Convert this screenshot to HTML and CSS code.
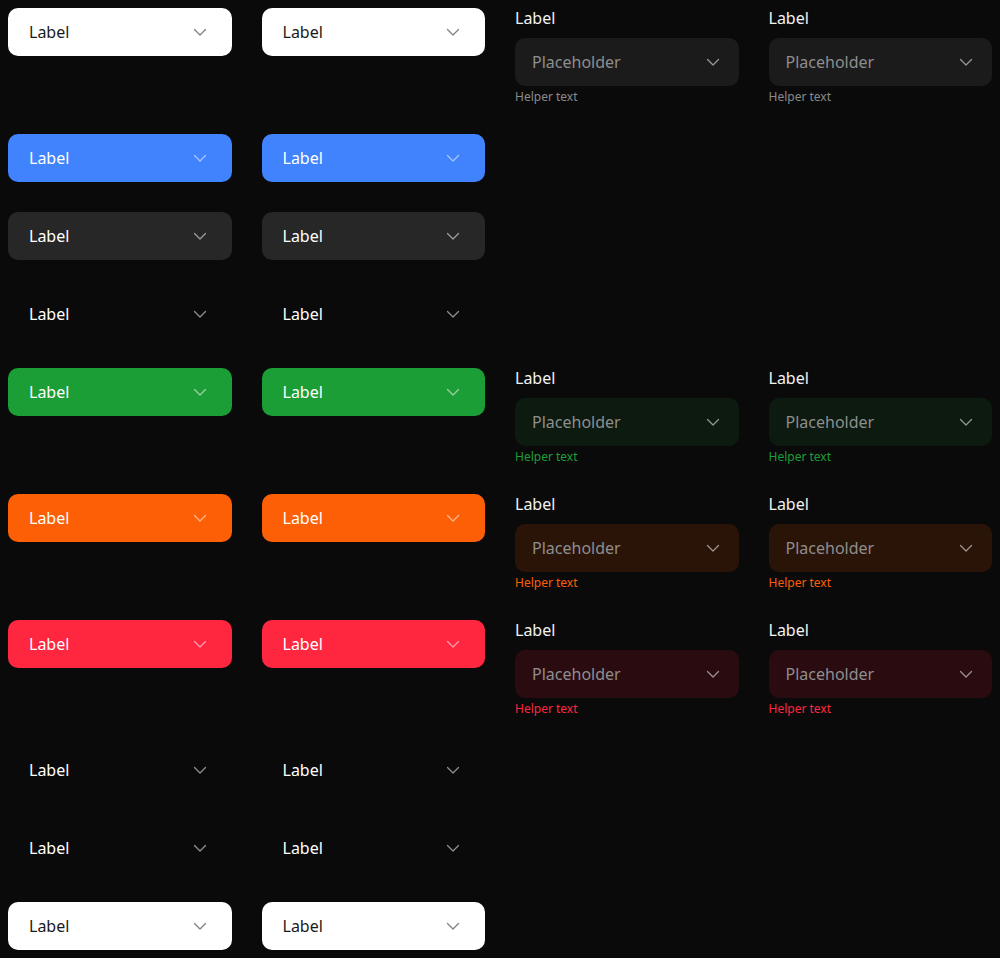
FILE: index.html
```html
<!DOCTYPE html>
<html lang="en">
<head>
  <meta charset="UTF-8">
  <title>Select variants</title>
  <link rel="stylesheet" href="styles.css">
</head>
<body>
  <svg style="display:none">
    <symbol id="chev" viewBox="0 0 24 24"><path d="M6.5 9.5l5.5 5.5 5.5-5.5" fill="none" stroke="currentColor" stroke-width="1.25" stroke-linecap="round" stroke-linejoin="round"/></symbol>
  </svg>
  <div class="grid">
    <!-- row 1 -->
    <div class="select white"><span>Label</span><svg class="chev"><use href="#chev"/></svg></div>
    <div class="select white"><span>Label</span><svg class="chev"><use href="#chev"/></svg></div>
    <div class="field">
      <label>Label</label>
      <div class="select box neutral"><span>Placeholder</span><svg class="chev"><use href="#chev"/></svg></div>
      <small class="helper">Helper text</small>
    </div>
    <div class="field">
      <label>Label</label>
      <div class="select box neutral"><span>Placeholder</span><svg class="chev"><use href="#chev"/></svg></div>
      <small class="helper">Helper text</small>
    </div>

    <!-- row 2 -->
    <div class="select blue"><span>Label</span><svg class="chev"><use href="#chev"/></svg></div>
    <div class="select blue"><span>Label</span><svg class="chev"><use href="#chev"/></svg></div>
    <div></div><div></div>

    <!-- row 3 -->
    <div class="select dark"><span>Label</span><svg class="chev"><use href="#chev"/></svg></div>
    <div class="select dark"><span>Label</span><svg class="chev"><use href="#chev"/></svg></div>
    <div></div><div></div>

    <!-- row 4 -->
    <div class="select ghost"><span>Label</span><svg class="chev"><use href="#chev"/></svg></div>
    <div class="select ghost"><span>Label</span><svg class="chev"><use href="#chev"/></svg></div>
    <div></div><div></div>

    <!-- row 5 -->
    <div class="select green"><span>Label</span><svg class="chev"><use href="#chev"/></svg></div>
    <div class="select green"><span>Label</span><svg class="chev"><use href="#chev"/></svg></div>
    <div class="field success">
      <label>Label</label>
      <div class="select box"><span>Placeholder</span><svg class="chev"><use href="#chev"/></svg></div>
      <small class="helper">Helper text</small>
    </div>
    <div class="field success">
      <label>Label</label>
      <div class="select box"><span>Placeholder</span><svg class="chev"><use href="#chev"/></svg></div>
      <small class="helper">Helper text</small>
    </div>

    <!-- row 6 -->
    <div class="select orange"><span>Label</span><svg class="chev"><use href="#chev"/></svg></div>
    <div class="select orange"><span>Label</span><svg class="chev"><use href="#chev"/></svg></div>
    <div class="field warning">
      <label>Label</label>
      <div class="select box"><span>Placeholder</span><svg class="chev"><use href="#chev"/></svg></div>
      <small class="helper">Helper text</small>
    </div>
    <div class="field warning">
      <label>Label</label>
      <div class="select box"><span>Placeholder</span><svg class="chev"><use href="#chev"/></svg></div>
      <small class="helper">Helper text</small>
    </div>

    <!-- row 7 -->
    <div class="select red"><span>Label</span><svg class="chev"><use href="#chev"/></svg></div>
    <div class="select red"><span>Label</span><svg class="chev"><use href="#chev"/></svg></div>
    <div class="field danger">
      <label>Label</label>
      <div class="select box"><span>Placeholder</span><svg class="chev"><use href="#chev"/></svg></div>
      <small class="helper">Helper text</small>
    </div>
    <div class="field danger">
      <label>Label</label>
      <div class="select box"><span>Placeholder</span><svg class="chev"><use href="#chev"/></svg></div>
      <small class="helper">Helper text</small>
    </div>

    <!-- row 8 -->
    <div class="select ghost"><span>Label</span><svg class="chev"><use href="#chev"/></svg></div>
    <div class="select ghost"><span>Label</span><svg class="chev"><use href="#chev"/></svg></div>
    <div></div><div></div>

    <!-- row 9 -->
    <div class="select ghost"><span>Label</span><svg class="chev"><use href="#chev"/></svg></div>
    <div class="select ghost"><span>Label</span><svg class="chev"><use href="#chev"/></svg></div>
    <div></div><div></div>

    <!-- row 10 -->
    <div class="select white"><span>Label</span><svg class="chev"><use href="#chev"/></svg></div>
    <div class="select white"><span>Label</span><svg class="chev"><use href="#chev"/></svg></div>
    <div></div><div></div>
  </div>
</body>
</html>
```

FILE: styles.css
```css
body {
  margin: 0;
  padding: 8px;
  background: #0a0a0a;
  color: #f2f2f2;
  font-family: "Noto Sans", "Open Sans", sans-serif;
}
.grid {
  display: grid;
  grid-template-columns: repeat(4, 1fr);
  column-gap: 30px;
  row-gap: 30px;
  align-items: start;
}
.select {
  height: 48px;
  box-sizing: border-box;
  display: flex;
  align-items: center;
  justify-content: space-between;
  padding: 0 20px 0 21px;
  border-radius: 10px;
  font-size: 16px;
  color: #fff;
}
.chev {
  width: 24px;
  height: 24px;
  opacity: 0.55;
}
.white {
  background: #fff;
  color: #1a1a1a;
}
.blue { background: #4083fd; }
.dark { background: #272727; }
.ghost { background: transparent; }
.green { background: #1c9e37; }
.orange { background: #fc5f06; }
.red { background: #ff2640; }

.field {
  display: flex;
  flex-direction: column;
  height: 96px;
}
.field label {
  font-size: 16px;
  line-height: 20px;
  margin-bottom: 10px;
  color: #f2f2f2;
}
.box {
  background: #1b1b1b;
  color: #8e8e8e;
  padding-left: 17px;
  padding-right: 14px;
}
.box .chev {
  color: #fff;
  opacity: 0.55;
}
.helper {
  font-size: 12px;
  line-height: 15px;
  margin-top: 3px;
  color: #8a8a8a;
}
.success .box { background: #0c1a0f; }
.success .helper { color: #1c9e37; }
.warning .box { background: #2a1408; }
.warning .helper { color: #fc5f06; }
.danger .box { background: #2a0b10; }
.danger .helper { color: #ff2640; }
```
